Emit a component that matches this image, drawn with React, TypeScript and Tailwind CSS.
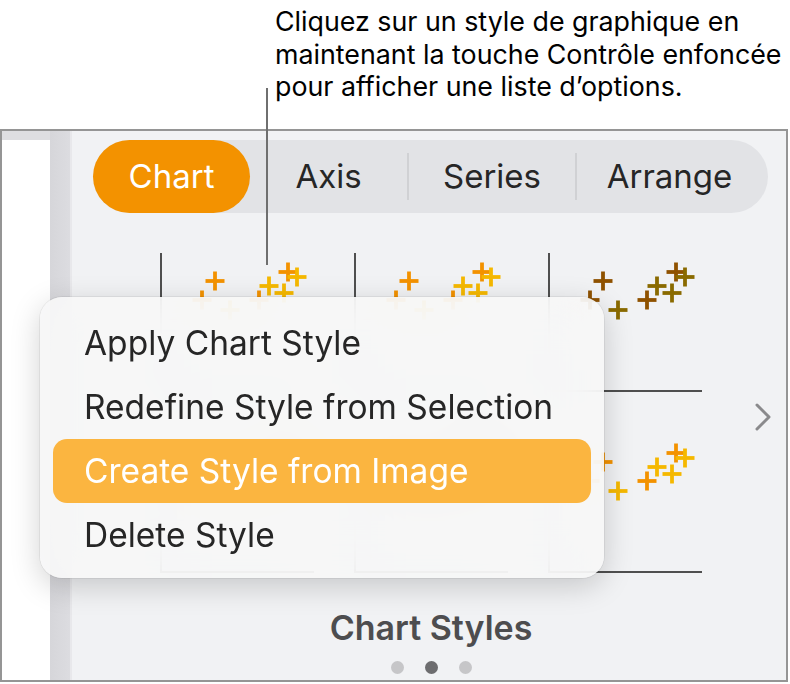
const font = { fontFamily: "Inter, 'Noto Sans', sans-serif" };

// positions of the plus markers inside a thumbnail (x, y, tone)
const points: [number, number, number][] = [
  [42, 47, 0],
  [55, 28, 0],
  [70, 57, 1],
  [99, 47, 0],
  [109, 33, 1],
  [124, 40, 1],
  [128, 19, 0],
  [137, 24, 1],
];

const warm = ["#f39200", "#f5b800"];
const earth = ["#8f5200", "#8a6a00"];

function Thumb({ tones }: { tones: string[] }) {
  return (
    <div className="relative h-[139px] w-[154px] border-b-2 border-l-2 border-[#4f4f4f]">
      <svg width="160" height="139" className="absolute -left-[2px] top-0">
        {points.map(([x, y, t], i) => (
          <g key={i} stroke={tones[t]} strokeWidth="3.8">
            <line x1={x - 9.5} y1={y} x2={x + 9.5} y2={y} />
            <line x1={x} y1={y - 9.5} x2={x} y2={y + 9.5} />
          </g>
        ))}
      </svg>
    </div>
  );
}

const menu = [
  "Apply Chart Style",
  "Redefine Style from Selection",
  "Create Style from Image",
  "Delete Style",
];

export default function App() {
  return (
    <div className="relative h-[684px] w-[790px] overflow-hidden bg-white" style={font}>
      {/* callout */}
      <div className="h-[129px] whitespace-nowrap pl-[275px] pt-[5px] text-[26.8px] leading-[32.5px] text-black">
        <p>Cliquez sur un style de graphique en</p>
        <p>maintenant la touche Contrôle enfoncée</p>
        <p>pour afficher une liste d’options.</p>
      </div>

      <div className="flex h-[553px] w-[788px] border-2 border-[#959595]">
        {/* sidebar */}
        <div className="w-[48px] bg-[#dedee1] pt-[9px]">
          <div className="h-full bg-white" />
        </div>
        <div className="w-[20px] bg-gradient-to-r from-[#d6d6da] to-[#dcdce0]" />
        <div className="w-[2px] bg-[#e8e8eb]" />

        {/* inspector panel */}
        <div className="flex flex-1 flex-col bg-[#f1f2f4] pl-[21px] pt-[9px]">
          <div className="flex h-[73px] w-[675px] items-center rounded-full bg-[#e2e3e6] text-[33px] text-[#262626]">
            <div className="flex h-full w-[157px] items-center justify-center rounded-full bg-[#f39200] text-white">
              Chart
            </div>
            <div className="flex w-[157px] justify-center">Axis</div>
            <div className="h-[47px] w-[2px] bg-[#d0d1d4]" />
            <div className="flex w-[166px] justify-center">Series</div>
            <div className="h-[47px] w-[2px] bg-[#d0d1d4]" />
            <div className="flex flex-1 justify-center pr-[6px]">Arrange</div>
          </div>

          <div className="mt-[40px] flex items-center pl-[67px]">
            <div className="grid grid-cols-3 gap-x-[40px] gap-y-[42px]">
              <Thumb tones={warm} />
              <Thumb tones={warm} />
              <Thumb tones={earth} />
              <Thumb tones={warm} />
              <Thumb tones={earth} />
              <Thumb tones={warm} />
            </div>
            <svg width="16" height="28" viewBox="0 0 16 28" className="ml-[53px] mt-[8px]">
              <polyline
                points="2,2 14,14 2,26"
                fill="none"
                stroke="#8a8a8c"
                strokeWidth="3"
                strokeLinecap="round"
                strokeLinejoin="round"
              />
            </svg>
          </div>

          <div className="mt-[36px] pr-[17px] text-center text-[34px] font-semibold leading-[38px] text-[#4d4d4f]">
            Chart Styles
          </div>
          <div className="mt-[14px] flex justify-center gap-[21px] pr-[17px]">
            <span className="h-[13px] w-[13px] rounded-full bg-[#c6c6c8]" />
            <span className="h-[13px] w-[13px] rounded-full bg-[#6d6d6f]" />
            <span className="h-[13px] w-[13px] rounded-full bg-[#c6c6c8]" />
          </div>
        </div>
      </div>

      {/* callout line */}
      <div className="absolute left-[266px] top-[88px] h-[177px] w-[2px] bg-[#6f6f6f]" />

      {/* context menu */}
      <div className="absolute left-[40px] top-[297px] h-[281px] w-[564px] rounded-[22px] bg-[#f7f7f7]/90 px-[13px] pt-[14px] shadow-[0_8px_30px_rgba(0,0,0,0.18),0_0_0_1px_rgba(0,0,0,0.06)] backdrop-blur-xl">
        {menu.map((m, i) => (
          <div
            key={m}
            className={
              i === 2
                ? "flex h-[64px] items-center rounded-[14px] bg-[#fbb540] pl-[31px] text-[33.5px] text-white"
                : "flex h-[64px] items-center pl-[31px] text-[33.5px] text-[#262626]"
            }
          >
            {m}
          </div>
        ))}
      </div>
    </div>
  );
}
